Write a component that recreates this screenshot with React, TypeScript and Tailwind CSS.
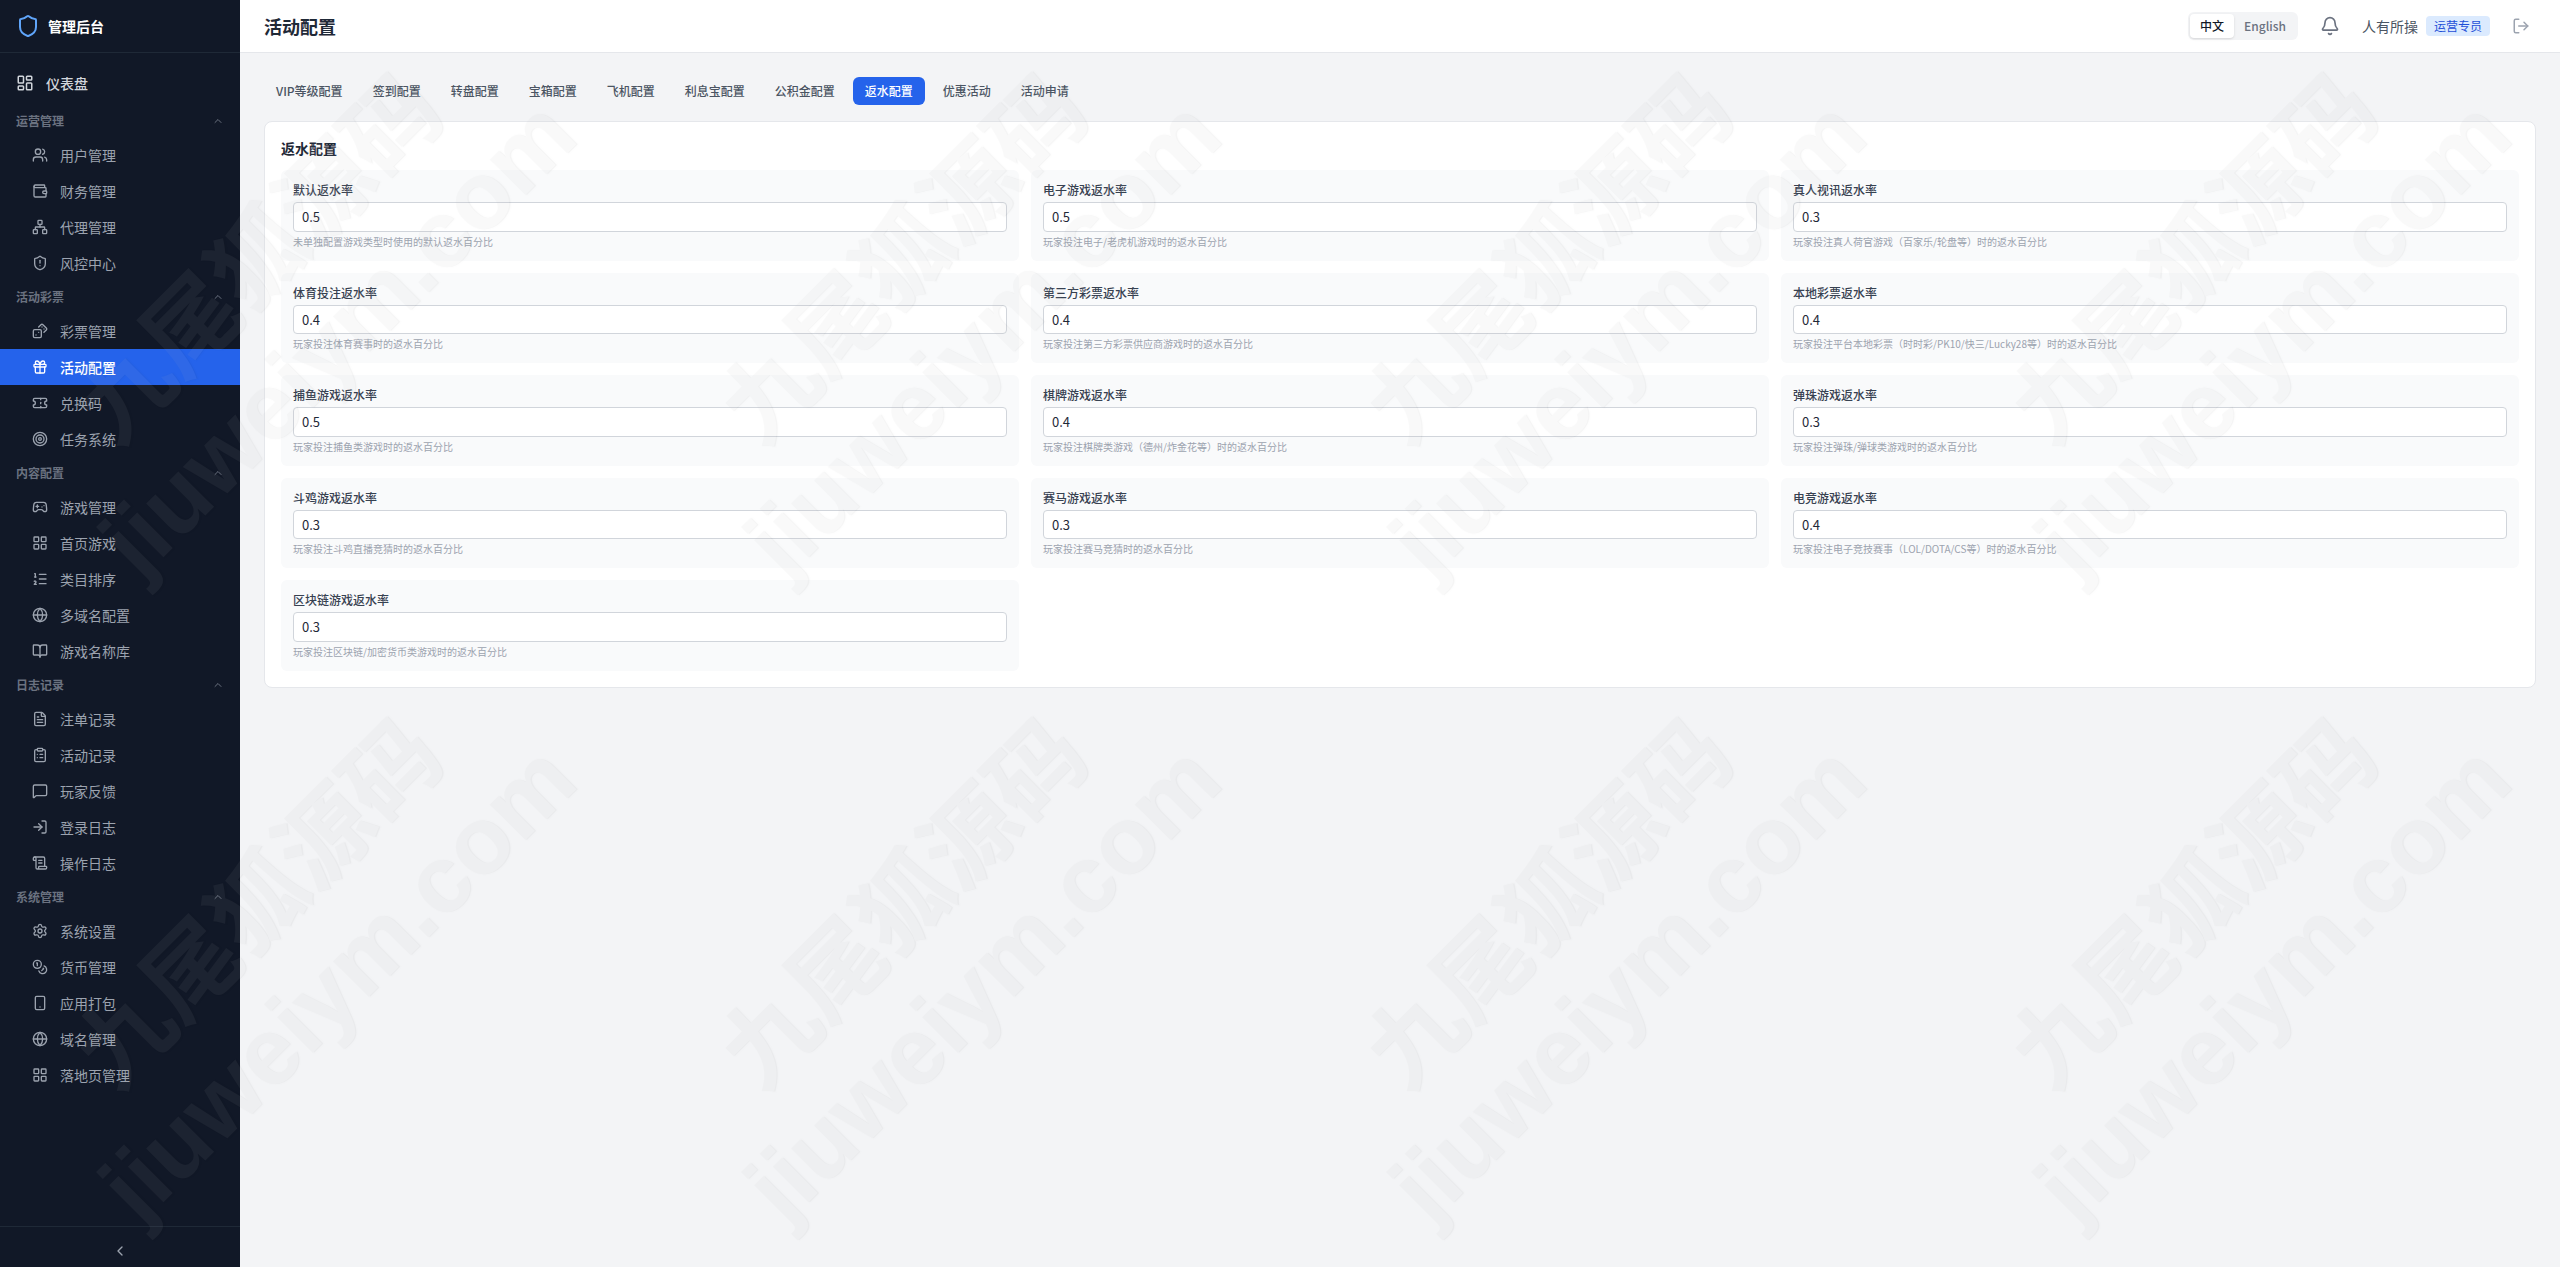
import React, { useState } from "react";
import {
  Bell,
  BookOpen,
  ChevronLeft,
  ChevronUp,
  ClipboardList,
  Coins,
  Dices,
  FileText,
  Gamepad2,
  Gift,
  Globe,
  LayoutDashboard,
  LayoutGrid,
  ListOrdered,
  LogIn,
  LogOut,
  MessageSquare,
  Network,
  ScrollText,
  Settings,
  Shield,
  ShieldAlert,
  Smartphone,
  Target,
  Ticket,
  Users,
  Wallet,
  type LucideIcon,
} from "lucide-react";

type NavItem = { label: string; icon: LucideIcon };
type NavSection = { title: string; items: NavItem[] };

const SECTIONS: NavSection[] = [
  {
    title: "运营管理",
    items: [
      { label: "用户管理", icon: Users },
      { label: "财务管理", icon: Wallet },
      { label: "代理管理", icon: Network },
      { label: "风控中心", icon: ShieldAlert },
    ],
  },
  {
    title: "活动彩票",
    items: [
      { label: "彩票管理", icon: Dices },
      { label: "活动配置", icon: Gift },
      { label: "兑换码", icon: Ticket },
      { label: "任务系统", icon: Target },
    ],
  },
  {
    title: "内容配置",
    items: [
      { label: "游戏管理", icon: Gamepad2 },
      { label: "首页游戏", icon: LayoutGrid },
      { label: "类目排序", icon: ListOrdered },
      { label: "多域名配置", icon: Globe },
      { label: "游戏名称库", icon: BookOpen },
    ],
  },
  {
    title: "日志记录",
    items: [
      { label: "注单记录", icon: FileText },
      { label: "活动记录", icon: ClipboardList },
      { label: "玩家反馈", icon: MessageSquare },
      { label: "登录日志", icon: LogIn },
      { label: "操作日志", icon: ScrollText },
    ],
  },
  {
    title: "系统管理",
    items: [
      { label: "系统设置", icon: Settings },
      { label: "货币管理", icon: Coins },
      { label: "应用打包", icon: Smartphone },
      { label: "域名管理", icon: Globe },
      { label: "落地页管理", icon: LayoutGrid },
    ],
  },
];

const ACTIVE_ITEM = "活动配置";

const TABS = [
  "VIP等级配置",
  "签到配置",
  "转盘配置",
  "宝箱配置",
  "飞机配置",
  "利息宝配置",
  "公积金配置",
  "返水配置",
  "优惠活动",
  "活动申请",
];

type RateField = { id: string; label: string; value: string; hint: string };

const FIELDS: RateField[] = [
  { id: "default", label: "默认返水率", value: "0.5", hint: "未单独配置游戏类型时使用的默认返水百分比" },
  { id: "slot", label: "电子游戏返水率", value: "0.5", hint: "玩家投注电子/老虎机游戏时的返水百分比" },
  { id: "live", label: "真人视讯返水率", value: "0.3", hint: "玩家投注真人荷官游戏（百家乐/轮盘等）时的返水百分比" },
  { id: "sports", label: "体育投注返水率", value: "0.4", hint: "玩家投注体育赛事时的返水百分比" },
  { id: "lottery3rd", label: "第三方彩票返水率", value: "0.4", hint: "玩家投注第三方彩票供应商游戏时的返水百分比" },
  { id: "lottery", label: "本地彩票返水率", value: "0.4", hint: "玩家投注平台本地彩票（时时彩/PK10/快三/Lucky28等）时的返水百分比" },
  { id: "fishing", label: "捕鱼游戏返水率", value: "0.5", hint: "玩家投注捕鱼类游戏时的返水百分比" },
  { id: "chess", label: "棋牌游戏返水率", value: "0.4", hint: "玩家投注棋牌类游戏（德州/炸金花等）时的返水百分比" },
  { id: "pinball", label: "弹珠游戏返水率", value: "0.3", hint: "玩家投注弹珠/弹球类游戏时的返水百分比" },
  { id: "cockfight", label: "斗鸡游戏返水率", value: "0.3", hint: "玩家投注斗鸡直播竞猜时的返水百分比" },
  { id: "horse", label: "赛马游戏返水率", value: "0.3", hint: "玩家投注赛马竞猜时的返水百分比" },
  { id: "esports", label: "电竞游戏返水率", value: "0.4", hint: "玩家投注电子竞技赛事（LOL/DOTA/CS等）时的返水百分比" },
  { id: "blockchain", label: "区块链游戏返水率", value: "0.3", hint: "玩家投注区块链/加密货币类游戏时的返水百分比" },
];

function Sidebar() {
  return (
    <aside className="sticky top-0 flex h-screen w-60 shrink-0 flex-col bg-[#111827] text-sm text-[#9ca3af]">
      <div className="flex h-[53px] shrink-0 items-center gap-2 border-b border-[#1f2937] px-4">
        <Shield size={24} className="text-[#60a5fa]" />
        <span className="font-bold text-white">管理后台</span>
      </div>
      <nav className="flex-1 overflow-hidden py-2">
        <a href="#dashboard" className="flex items-center gap-3 px-4 py-3 font-medium text-[#d1d5db]">
          <LayoutDashboard size={18} />
          仪表盘
        </a>
        {SECTIONS.map((section) => (
          <div key={section.title}>
            <button
              type="button"
              className="flex w-full items-center justify-between px-4 py-2 text-xs font-semibold text-[#6b7280]"
            >
              {section.title}
              <ChevronUp size={12} />
            </button>
            {section.items.map(({ label, icon: Icon }) => (
              <a
                key={label}
                href={"#" + label}
                className={
                  label === ACTIVE_ITEM
                    ? "flex items-center gap-3 bg-[#2563eb] py-2 pr-4 pl-8 font-medium text-white"
                    : "flex items-center gap-3 py-2 pr-4 pl-8"
                }
              >
                <Icon size={16} />
                {label}
              </a>
            ))}
          </div>
        ))}
      </nav>
      <button
        type="button"
        aria-label="收起菜单"
        className="flex shrink-0 items-center justify-center border-t border-[#1f2937] pt-4 pb-2"
      >
        <ChevronLeft size={16} />
      </button>
    </aside>
  );
}

function Header() {
  return (
    <header className="flex h-[53px] items-center justify-between border-b border-[#e5e7eb] bg-white px-6">
      <h1 className="text-lg font-semibold text-[#1f2937]">活动配置</h1>
      <div className="flex items-center gap-4">
        <div className="flex rounded-md bg-[#f3f4f6] p-0.5 text-xs font-medium">
          <button type="button" className="rounded bg-white px-2.5 py-1 text-[#111827] shadow-sm">
            中文
          </button>
          <button type="button" className="rounded px-2.5 py-1 text-[#6b7280]">
            English
          </button>
        </div>
        <button type="button" aria-label="通知" className="p-1.5 text-[#6b7280]">
          <Bell size={20} />
        </button>
        <div className="flex items-center gap-2">
          <span className="text-sm text-[#4b5563]">人有所操</span>
          <span className="rounded bg-[#dbeafe] px-2 py-0.5 text-xs text-[#1d4ed8]">运营专员</span>
        </div>
        <button type="button" aria-label="退出登录" className="p-1.5 text-[#9ca3af]">
          <LogOut size={18} />
        </button>
      </div>
    </header>
  );
}

function RateCard({ field }: { field: RateField }) {
  const [value, setValue] = useState(field.value);
  return (
    <div className="rounded-md bg-[#f9fafb] p-3">
      <label htmlFor={field.id} className="mb-1 block text-xs font-medium text-[#374151]">
        {field.label}
      </label>
      <input
        id={field.id}
        type="number"
        step="0.1"
        value={value}
        onChange={(e) => setValue(e.target.value)}
        className="block w-full rounded border border-[#d1d5db] bg-white px-2 py-1 text-[13px] text-[#1f2937]"
      />
      <p className="mt-0.5 text-[10px] text-[#9ca3af]">{field.hint}</p>
    </div>
  );
}

function Watermark() {
  return (
    <div
      aria-hidden="true"
      className="pointer-events-none absolute inset-0 grid grid-cols-[repeat(4,645px)] content-start overflow-hidden opacity-[0.066]"
    >
      {Array.from({ length: 8 }, (_, i) => (
        <div
          key={i}
          className="flex h-[645px] -rotate-45 flex-col items-center justify-center pb-[70px] text-center font-['Liberation_Sans','Noto_Sans_CJK_SC',sans-serif] leading-[110px] font-bold whitespace-nowrap text-[#b7b7b7] [text-shadow:1px_1px_1px_rgba(0,0,0,0.6)]"
        >
          <span className="text-[94px]">九尾狐源码</span>
          <span className="text-[95px]">jiuweiym.com</span>
        </div>
      ))}
    </div>
  );
}

export default function App() {
  const [tab, setTab] = useState("返水配置");
  return (
    <div className="relative flex min-h-screen bg-[#f3f4f6] font-['Noto_Sans_CJK_SC',sans-serif]">
      <Sidebar />
      <div className="min-w-0 flex-1">
        <Header />
        <main className="p-6">
          <div className="mb-4 flex flex-wrap gap-1.5">
            {TABS.map((name) => (
              <button
                key={name}
                type="button"
                onClick={() => setTab(name)}
                className={
                  name === tab
                    ? "rounded-md bg-[#2563eb] px-3 py-1.5 text-xs font-medium text-white"
                    : "rounded-md px-3 py-1.5 text-xs font-medium text-[#4b5563]"
                }
              >
                {name}
              </button>
            ))}
          </div>
          <section className="rounded-lg border border-[#e5e7eb] bg-white p-4">
            <h2 className="mb-3 text-sm font-semibold text-[#1f2937]">返水配置</h2>
            <div className="grid grid-cols-3 gap-3">
              {FIELDS.map((field) => (
                <RateCard key={field.id} field={field} />
              ))}
            </div>
          </section>
        </main>
      </div>
      <Watermark />
    </div>
  );
}
